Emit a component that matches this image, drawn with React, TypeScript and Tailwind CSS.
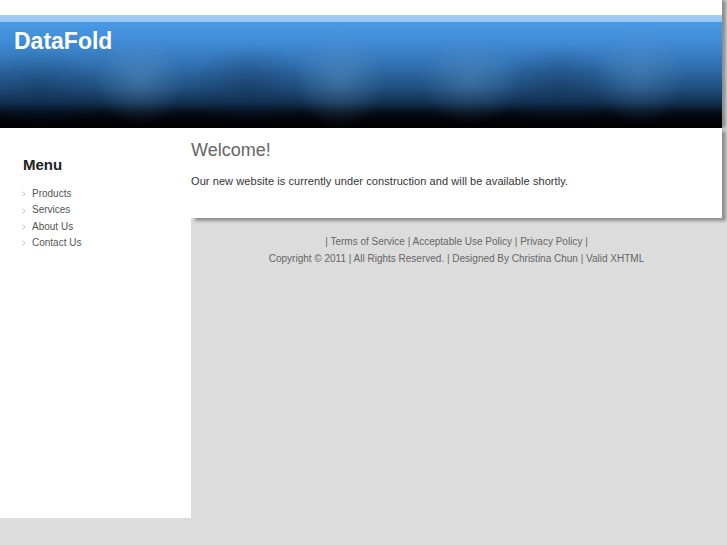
const menuItems = ['Products', 'Services', 'About Us', 'Contact Us'];

function Arrow() {
  return (
    <svg width="4" height="6" viewBox="0 0 4 6" className="shrink-0">
      <polyline points="0.5,0.8 3,3 0.5,5.2" fill="none" stroke="#c0c0c0" strokeWidth="1" />
    </svg>
  );
}

export default function App() {
  return (
    <div className="min-h-[545px] bg-[#dcdcdc] font-['Liberation_Sans',Arial,sans-serif]">
      <div className="w-[722px]">
        {/* Header */}
        <div className="bg-white pt-[15px] shadow-[4px_0_3px_rgba(0,0,0,0.35)]">
          <header className="relative h-[113px] overflow-hidden bg-[linear-gradient(180deg,#a3cef7_0px,#96c5f2_7px,#4a9be6_7px,#3e88d2_30px,#306fad_52px,#21517f_72px,#123253_87px,#06101b_97px,#020409_104px,#000_113px)]">
            {/* soft cloud streaks */}
            <div className="pointer-events-none absolute inset-0 bg-[radial-gradient(ellipse_45px_45px_at_140px_65px,rgba(120,170,220,0.3),transparent),radial-gradient(ellipse_60px_40px_at_250px_70px,rgba(15,40,75,0.35),transparent),radial-gradient(ellipse_45px_50px_at_340px_65px,rgba(120,170,220,0.3),transparent),radial-gradient(ellipse_50px_45px_at_470px_65px,rgba(120,170,220,0.28),transparent),radial-gradient(ellipse_60px_40px_at_560px_70px,rgba(15,40,75,0.35),transparent),radial-gradient(ellipse_45px_50px_at_640px_60px,rgba(110,160,215,0.28),transparent),radial-gradient(ellipse_70px_40px_at_40px_75px,rgba(15,40,75,0.3),transparent)]" />
            <h1 className="relative px-[14px] pt-[15px] text-[23px] font-bold leading-none text-white">
              DataFold
            </h1>
          </header>
        </div>

        <div className="flex">
          {/* Sidebar */}
          <aside className="h-[390px] w-[191px] shrink-0 bg-white pl-[22px] pt-[29px]">
            <h2 className="pl-px text-[15px] font-bold leading-none text-[#222]">Menu</h2>
            <ul className="mt-[14px] text-[10px] leading-[16.4px] text-[#555]">
              {menuItems.map((item) => (
                <li key={item} className="flex items-center gap-[6px]">
                  <Arrow />
                  <a>{item}</a>
                </li>
              ))}
            </ul>
          </aside>

          {/* Main */}
          <div className="flex-1">
            <div className="h-[90px] bg-white pt-[13px] shadow-[4px_3px_3px_rgba(0,0,0,0.35)]">
              <h2 className="text-[18px] leading-none text-[#666]">Welcome!</h2>
              <p className="mt-[15px] text-[11px] leading-[14px] tracking-[0.08px] text-[#333]">
                Our new website is currently under construction and will be available shortly.
              </p>
            </div>
            <footer className="pt-[15px] text-center text-[10px] leading-[17px] text-[#666]">
              <p>| Terms of Service | Acceptable Use Policy | Privacy Policy |</p>
              <p>Copyright © 2011 | All Rights Reserved. | Designed By Christina Chun | Valid XHTML</p>
            </footer>
          </div>
        </div>
      </div>
    </div>
  );
}
